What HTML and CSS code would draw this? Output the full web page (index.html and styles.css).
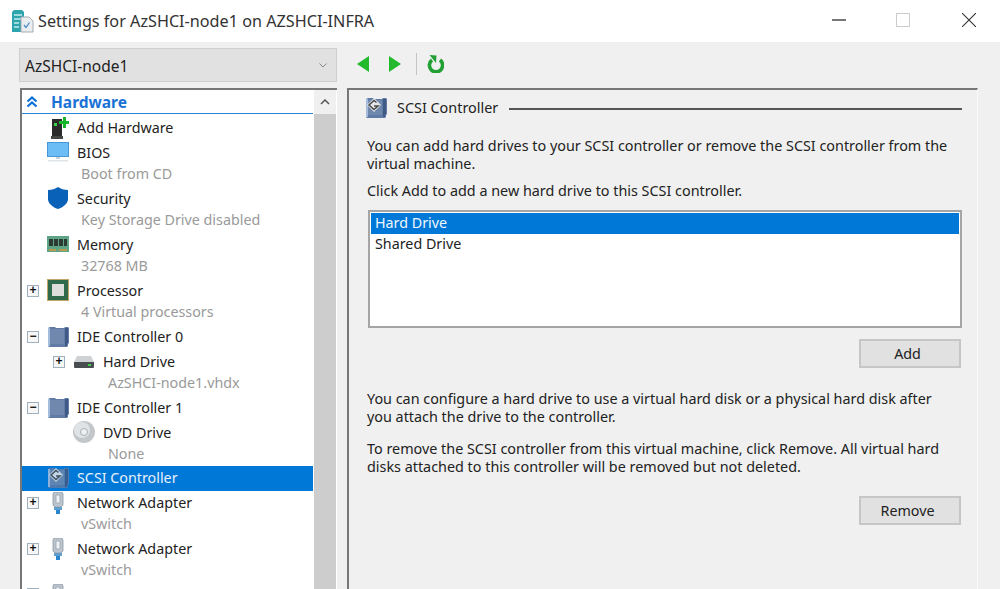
FILE: index.html
```html
<!DOCTYPE html>
<html lang="en">
<head>
  <meta charset="UTF-8" />
  <title>Settings for AzSHCI-node1 on AZSHCI-INFRA</title>
  <link rel="stylesheet" href="styles.css">
</head>
<body>
  <!-- shared icons -->
  <svg class="icon-defs" aria-hidden="true">
    <symbol id="chip" viewBox="0 0 22 20">
      <path d="M1 1l2-1h5l1 1h8l1-1h3l1 1v15l-1 1v2l-1 1H2l-1-1z" fill="#5f7ba6"/>
      <path d="M3 2h14v15H3z" fill="#7088ad"/>
      <path d="M1 1h2v18H1z" fill="#a6bcdc"/>
      <path d="M18 1h3v15l-1 1v2h-2z" fill="#3f5a84"/>
    </symbol>
    <symbol id="scsi" viewBox="0 0 22 20">
      <use href="#chip" width="22" height="20"/>
      <path d="M9 0l7 7-7 7-7-7z" fill="#e4e7ea"/>
      <path d="M11.500 4.500L9 2.500 4 7l5 4.500L13 8H9" fill="none" stroke="#4a4a4a" stroke-width="1.500"/>
    </symbol>
    <symbol id="plug" viewBox="0 0 12 22">
      <path d="M2 0h8l1 2v11l-2 2H3l-2-2V2z" fill="#bcc5ce" stroke="#8c98a5" stroke-width=".8"/>
      <path d="M4 3h4v8H4z" fill="#eef1f4" stroke="#98a4b0" stroke-width=".8"/>
      <path d="M2 15h8v3H2z" fill="#5f9ecf"/>
      <path d="M4 18h4v4H4z" fill="#2887d0"/>
    </symbol>
  </svg>

  <header class="titlebar">
    <svg class="app-icon" viewBox="0 0 22 23">
      <path d="M0 2l2-2h8l2 2v20H0z" fill="#2ca5ad"/>
      <path d="M2 5h8M2 9h8M2 13h5M2 17h5" stroke="#c5ecec" stroke-width="1.500"/>
      <path d="M9 7h8l4 4v11H9z" fill="#e9edf0" stroke="#a3abb2"/>
      <path d="M12 15l2 2.500 3.500-5" fill="none" stroke="#4a8ac4" stroke-width="1.300"/>
    </svg>
    <h1 class="title">Settings for AzSHCI-node1 on AZSHCI-INFRA</h1>
    <div class="window-buttons">
      <span class="win-min"></span>
      <span class="win-max"></span>
      <svg class="win-close" viewBox="0 0 14 14"><path d="M0 0l14 14M14 0L0 14" stroke="#333" stroke-width="1.100"/></svg>
    </div>
  </header>

  <main class="window-body">
    <div class="vm-select">
      <span>AzSHCI-node1</span>
      <svg class="chevron" viewBox="0 0 8 5"><path d="M.5.500L4 4 7.500.500" fill="none" stroke="#888" stroke-width="1"/></svg>
    </div>

    <div class="toolbar">
      <svg class="nav-arrow" viewBox="0 0 12 16"><path d="M12 0v16L0 8z" fill="#22b92c"/></svg>
      <svg class="nav-arrow" viewBox="0 0 12 16"><path d="M0 0v16l12-8z" fill="#22b92c"/></svg>
      <span class="toolbar-sep"></span>
      <svg class="refresh" viewBox="0 0 18 18">
        <path d="M6 5A6.600 6.600 0 1 0 14 5" fill="none" stroke="#23a033" stroke-width="3.600"/>
        <path d="M3.500 0l7 .5-.5 7.500z" fill="#23a033"/>
      </svg>
    </div>

    <nav class="tree">
      <div class="tree-list">
        <div class="tree-head">
          <svg class="collapse" viewBox="0 0 12 12"><path d="M1.500 5.500L6 1.500l4.500 4M1.500 10.500L6 6.500l4.500 4" fill="none" stroke="#0a6fd8" stroke-width="2.200"/></svg>
          <span>Hardware</span>
        </div>

        <div class="row row-first">
          <svg class="ico ico-add" viewBox="0 0 22 22">
            <path d="M5 2h10v17H5z" fill="#2b2b2b"/>
            <path d="M4 19h12v3H4z" fill="#454545"/>
            <path d="M7 6h3v3H7z" fill="#3ad04a"/>
            <path d="M16 0h3v4h3v3h-3v4h-3V7h-4V4h4z" fill="#17b52a"/>
          </svg>
          <span class="name">Add Hardware</span>
        </div>

        <div class="row">
          <svg class="ico" viewBox="0 0 22 20">
            <path d="M0 0h22v15H0z" fill="#4a97d8"/>
            <path d="M1 1h20v13H1z" fill="#6cbcf6"/>
            <path d="M9 15h4v2H9z" fill="#c9d2da"/>
            <path d="M1 18h20v1.500H1z" fill="#dfe4e9"/>
          </svg>
          <span class="name">BIOS</span>
        </div>
        <div class="sub">Boot from CD</div>

        <div class="row">
          <svg class="ico ico-tall" viewBox="0 0 22 22">
            <path d="M11 0c3 2 6 3 10 3v9c0 4-4 8-10 10C5 20 1 16 1 12V3c4 0 7-1 10-3z" fill="#0a62b8"/>
          </svg>
          <span class="name">Security</span>
        </div>
        <div class="sub">Key Storage Drive disabled</div>

        <div class="row">
          <svg class="ico ico-mem" viewBox="0 0 22 16">
            <path d="M0 0h22v16H0z" fill="#5ea585"/>
            <path d="M2 3h4v7H2zM7 3h4v7H7zM12 3h4v7h-4zM17 3h3v7h-3z" fill="#2c3a33"/>
            <path d="M2 13h7v2H2zM12 13h8v2h-8z" fill="#b89a50"/>
          </svg>
          <span class="name">Memory</span>
        </div>
        <div class="sub">32768 MB</div>

        <div class="row">
          <span class="box">+</span>
          <svg class="ico ico-tall" viewBox="0 0 22 22">
            <path d="M0 0h22v22H0z" fill="#c4a565"/>
            <path d="M1 1h20v20H1z" fill="#2f6a4a"/>
            <path d="M5 5h12v12H5z" fill="#dcdedc"/>
          </svg>
          <span class="name">Processor</span>
        </div>
        <div class="sub">4 Virtual processors</div>

        <div class="row row-tall">
          <span class="box">&minus;</span>
          <svg class="ico"><use href="#chip"/></svg>
          <span class="name">IDE Controller 0</span>
        </div>
        <div class="row row-child">
          <span class="box">+</span>
          <svg class="ico ico-hdd" viewBox="0 0 20 12">
            <path d="M3 0h14l3 6H0z" fill="#cfd2d4"/>
            <path d="M0 6h20v5a1 1 0 0 1-1 1H1a1 1 0 0 1-1-1z" fill="#4a4d50"/>
            <path d="M14 8h3v2h-3z" fill="#3fd04a"/>
          </svg>
          <span class="name">Hard Drive</span>
        </div>
        <div class="sub sub-child">AzSHCI-node1.vhdx</div>

        <div class="row row-tall">
          <span class="box">&minus;</span>
          <svg class="ico"><use href="#chip"/></svg>
          <span class="name">IDE Controller 1</span>
        </div>
        <div class="row row-child no-box">
          <svg class="ico ico-disc" viewBox="0 0 22 22">
            <circle cx="11" cy="11" r="11" fill="#c2c7ca"/>
            <circle cx="9" cy="9" r="8" fill="#dfe3e5"/>
            <circle cx="11" cy="11" r="3.500" fill="#eef0f1" stroke="#a8aeb2"/>
          </svg>
          <span class="name">DVD Drive</span>
        </div>
        <div class="sub sub-child">None</div>

        <div class="row selected">
          <svg class="ico ico-scsi"><use href="#scsi"/></svg>
          <span class="name">SCSI Controller</span>
        </div>

        <div class="row">
          <span class="box">+</span>
          <svg class="ico ico-plug"><use href="#plug"/></svg>
          <span class="name">Network Adapter</span>
        </div>
        <div class="sub">vSwitch</div>

        <div class="row">
          <span class="box">+</span>
          <svg class="ico ico-plug"><use href="#plug"/></svg>
          <span class="name">Network Adapter</span>
        </div>
        <div class="sub">vSwitch</div>

        <div class="row row-last">
          <span class="box"></span>
          <svg class="ico ico-plug"><use href="#plug"/></svg>
        </div>
      </div>

      <div class="scrollbar">
        <div class="scroll-up">
          <svg viewBox="0 0 10 6"><path d="M1 5l4-4 4 4" fill="none" stroke="#555" stroke-width="1.500"/></svg>
        </div>
      </div>
    </nav>

    <section class="pane">
      <div class="pane-head">
        <svg class="pane-icon"><use href="#scsi"/></svg>
        <h2>SCSI Controller</h2>
        <span class="head-rule"></span>
      </div>

      <p class="intro">You can add hard drives to your SCSI controller or remove the SCSI controller from the virtual machine.</p>
      <p class="click-add">Click Add to add a new hard drive to this SCSI controller.</p>

      <div class="listbox">
        <div class="list-item active">Hard Drive</div>
        <div class="list-item">Shared Drive</div>
      </div>

      <div class="btn-row btn-add"><button>Add</button></div>

      <p class="note">You can configure a hard drive to use a virtual hard disk or a physical hard disk after you attach the drive to the controller.</p>
      <p class="note note-second">To remove the SCSI controller from this virtual machine, click Remove. All virtual hard disks attached to this controller will be removed but not deleted.</p>

      <div class="btn-row btn-remove"><button>Remove</button></div>
    </section>
  </main>
</body>
</html>
```

FILE: styles.css
```css
* {
  box-sizing: border-box;
  margin: 0;
  padding: 0;
}

html, body {
  height: 589px;
  overflow: hidden;
}

body {
  font-family: "Noto Sans", "Open Sans", sans-serif;
  font-size: 14.3px;
  color: #222;
  background: #f0f0f0;
  display: flex;
  flex-direction: column;
}

.icon-defs {
  width: 0;
  height: 0;
  position: absolute;
}

/* Title bar */
.titlebar {
  height: 42px;
  flex: none;
  background: #fff;
  display: flex;
  align-items: center;
  padding: 0 24px 0 12px;
}

.app-icon {
  width: 22px;
  height: 23px;
  margin-right: 4px;
}

.title {
  font-size: 16.2px;
  font-weight: 400;
  color: #333;
  padding-bottom: 1px;
}

.window-buttons {
  margin-left: auto;
  display: flex;
  align-items: center;
  height: 14px;
  margin-top: -2px;
}

.win-min {
  width: 14px;
  height: 2px;
  background: #777;
}

.win-max {
  width: 14px;
  height: 14px;
  margin-left: 50px;
  border: 1px solid #ccc;
}

.win-close {
  width: 14px;
  height: 14px;
  margin-left: 52px;
}

/* Body grid */
.window-body {
  flex: 1;
  min-height: 0;
  display: grid;
  grid-template-columns: 318px 631px;
  grid-template-rows: 34px 1fr;
  column-gap: 10px;
  row-gap: 6px;
  padding: 6px 0 0 19px;
}

.vm-select {
  display: flex;
  align-items: center;
  justify-content: space-between;
  background: #e1e1e1;
  border: 1px solid #cfcfcf;
  padding: 1px 9px 0 5px;
  font-size: 15.5px;
}

.chevron {
  width: 8px;
  height: 5px;
}

.toolbar {
  display: flex;
  align-items: center;
  padding: 0 0 3px 10px;
}

.nav-arrow {
  width: 12px;
  height: 16px;
  margin-right: 20px;
}

.nav-arrow + .nav-arrow {
  margin-right: 15px;
}

.toolbar-sep {
  width: 1px;
  height: 22px;
  background: #c4c4c4;
  margin-right: 9px;
}

.refresh {
  width: 18px;
  height: 18px;
}

/* Tree on the left */
.tree {
  display: flex;
  background: #fff;
  margin-left: 1px;
  border-top: 2px solid #777;
  border-left: 2px solid #777;
  min-height: 0;
  overflow: hidden;
}

.tree-list {
  flex: 1;
  min-width: 0;
  overflow: hidden;
  margin-right: 1px;
}

.tree-head {
  height: 24px;
  display: flex;
  align-items: center;
  padding-left: 4px;
  border-bottom: 1px solid #2a85d8;
  color: #1a72d6;
  font-weight: 700;
  font-size: 15.5px;
}

.collapse {
  width: 12px;
  height: 12px;
  margin-right: 13px;
}

.row {
  height: 24px;
  display: flex;
  align-items: center;
  padding: 0 0 2px 25px;
  position: relative;
  white-space: nowrap;
}

.row-first {
  height: 27px;
  padding-top: 2px;
}

.row-tall {
  height: 25px;
}

.row-child {
  padding-left: 52px;
}

.row-child .box {
  left: 31px;
}

.row-last .box {
  top: 5px;
}

.box {
  position: absolute;
  left: 5px;
  top: 6px;
  width: 12px;
  height: 12px;
  border: 1px solid #9fb0bf;
  font-size: 12px;
  line-height: 9px;
  text-align: center;
  color: #111;
  background: #f6f6f6;
  font-family: "Liberation Sans", sans-serif;
  font-weight: 700;
}

.ico {
  width: 22px;
  height: 20px;
  flex: none;
}

.ico-add,
.ico-tall {
  height: 22px;
}

.ico-mem {
  height: 16px;
}

.ico-hdd {
  width: 20px;
  height: 12px;
  margin-top: 2px;
}

.ico-disc {
  height: 22px;
  margin-left: -1px;
}

.ico-plug {
  height: 22px;
  width: 12px;
  margin: 2px 5px 0;
}

.ico-scsi {
  opacity: .85;
}

.name {
  margin-left: 8px;
  color: #222;
}

.row-child .name {
  margin-left: 9px;
}

.no-box .name {
  margin-left: 8px;
}

.sub {
  height: 22px;
  line-height: 18px;
  padding: 0 0 4px 59px;
  color: #9a9a9a;
  white-space: nowrap;
}

.sub-child {
  padding-left: 86px;
}

.selected {
  background: #0078d7;
  height: 25px;
  margin-top: -1px;
}

.selected .name {
  color: #e6f1fb;
}

.scrollbar {
  width: 22px;
  flex: none;
  background: #cdcdcd;
  margin-right: 1px;
}

.scroll-up {
  height: 24px;
  background: #f0f0f0;
  display: flex;
  align-items: center;
  justify-content: center;
}

.scroll-up svg {
  width: 10px;
  height: 6px;
}

/* Right pane */
.pane {
  border-top: 2px solid #777;
  border-left: 2px solid #777;
  border-right: 1px solid #fafafa;
  padding: 0 15px 0 18px;
  min-height: 0;
  overflow: hidden;
}

.pane-head {
  display: flex;
  align-items: center;
  height: 20px;
  margin-top: 8px;
}

.pane-icon {
  width: 22px;
  height: 20px;
  margin-left: -2px;
}

.pane-head h2 {
  font-size: 14.4px;
  font-weight: 400;
  margin-left: 10px;
  padding-bottom: 1px;
  white-space: nowrap;
}

.head-rule {
  flex: 1;
  height: 2px;
  background: #555;
  margin: 2px 0 0 11px;
}

.intro,
.click-add,
.note {
  font-size: 14.37px;
  line-height: 18px;
}

.intro {
  margin-top: 19px;
}

.click-add {
  margin-top: 9px;
}

.listbox {
  height: 118px;
  margin-top: 10px;
  background: #fff;
  border: 2px solid #a5a5a5;
  padding: 1px;
  margin-left: 1px;
}

.list-item {
  height: 21px;
  line-height: 20px;
  padding-left: 4px;
}

.active {
  background: #0078d7;
  color: #f0f7fd;
}

.btn-row {
  display: flex;
  justify-content: flex-end;
  padding-right: 1px;
}

.btn-add {
  margin-top: 11px;
}

.btn-remove {
  margin-top: 20px;
}

button {
  width: 102px;
  height: 29px;
  background: #e1e1e1;
  border: 2px solid #c6c6c6;
  padding-right: 5px;
  font: inherit;
  color: #222;
}

.note {
  margin-top: 22px;
  padding-right: 20px;
}

.note-second {
  margin-top: 14px;
}
```
